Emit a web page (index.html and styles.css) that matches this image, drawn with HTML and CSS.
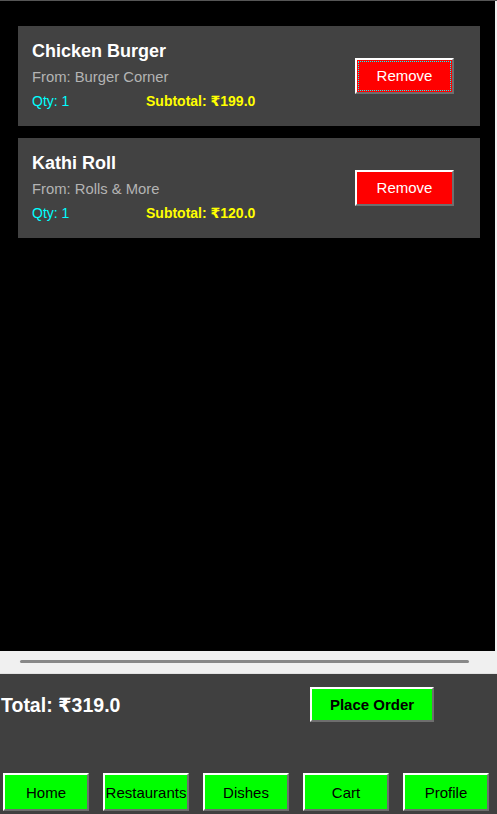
FILE: index.html
```html
<!DOCTYPE html>
<html>
<head>
<meta charset="utf-8">
<link rel="stylesheet" href="styles.css">
</head>
<body>
<div class="app">
  <div class="canvas-row">
    <div class="canvas">
      <div class="card">
        <div class="info">
          <div class="name">Chicken Burger</div>
          <div class="from">From: Burger Corner</div>
          <div class="meta"><span class="qty">Qty: 1</span><span class="sub">Subtotal: ₹199.0</span></div>
        </div>
        <button class="btn remove focus">Remove</button>
      </div>
      <div class="card">
        <div class="info">
          <div class="name">Kathi Roll</div>
          <div class="from">From: Rolls &amp; More</div>
          <div class="meta"><span class="qty">Qty: 1</span><span class="sub">Subtotal: ₹120.0</span></div>
        </div>
        <button class="btn remove">Remove</button>
      </div>
    </div>
    <div class="edge"></div>
  </div>
  <div class="scroll"><div class="thumb"></div></div>
  <div class="footer">
    <div class="total-row">
      <div class="total">Total: ₹319.0</div>
      <button class="btn order">Place Order</button>
    </div>
    <nav class="nav">
      <button class="btn navbtn">Home</button>
      <button class="btn navbtn">Restaurants</button>
      <button class="btn navbtn">Dishes</button>
      <button class="btn navbtn">Cart</button>
      <button class="btn navbtn">Profile</button>
    </nav>
  </div>
</div>
</body>
</html>
```
FILE: styles.css
```css
* { box-sizing: border-box; }
html, body { margin: 0; padding: 0; }
body {
  width: 497px;
  height: 814px;
  overflow: hidden;
  background: #404040;
  font-family: "Liberation Sans", "DejaVu Sans", Arial, sans-serif;
}
.app { display: flex; flex-direction: column; height: 814px; }
.canvas-row { display: flex; height: 651px; border-top: 1px solid #555; }
.canvas { width: 495px; background: #000; padding-top: 25px; display: flex; flex-direction: column; gap: 12px; }
.edge { width: 2px; background: #f0f0f0; }
.card {
  margin-left: 18px;
  width: 462px;
  height: 100px;
  background: #424242;
  display: flex;
  align-items: center;
  justify-content: space-between;
  padding: 0 26px 0 14px;
}
.info { display: flex; flex-direction: column; margin-top: -1px; }
.name { color: #fff; font-weight: bold; font-size: 18px; line-height: 20px; }
.from { color: #b4b4b4; font-size: 14.8px; line-height: 20px; margin-top: 6px; }
.meta { display: flex; font-size: 14px; line-height: 20px; margin-top: 4px; }
.qty { color: #00ffff; width: 114px; }
.sub { color: #ffff00; font-weight: bold; }
.btn {
  font-family: "Liberation Sans", "DejaVu Sans", Arial, sans-serif;
  font-size: 15px;
  border-style: solid;
  border-width: 2px;
  border-color: #ffffff #6e6e6e #6e6e6e #ffffff;
  padding: 0;
  margin: 0;
  color: #000;
}
.remove { width: 99px; height: 36px; background: #ff0000; color: #fff; margin-top: -1px; }
.remove.focus { outline: 1px dotted #00ffff; outline-offset: -4px; }
.scroll { height: 23px; background: #f0f0f0; padding: 9px 28px 0 20px; border-bottom: 1px solid #e2e2e2; }
.thumb { height: 3px; background: #888; border-radius: 2px; }
.footer { flex: 1; background: #404040; display: flex; flex-direction: column; }
.total-row { display: flex; align-items: center; padding: 13px 0 0 1px; height: 48px; }
.total { color: #fff; font-weight: bold; font-size: 19.5px; width: 309px; padding-top: 1px; }
.order { width: 124px; height: 35px; background: #00ff00; font-weight: bold; }
.nav { display: flex; gap: 14px; padding: 51px 0 0 3px; }
.navbtn { width: 86px; height: 38px; background: #00ff00; }
```
